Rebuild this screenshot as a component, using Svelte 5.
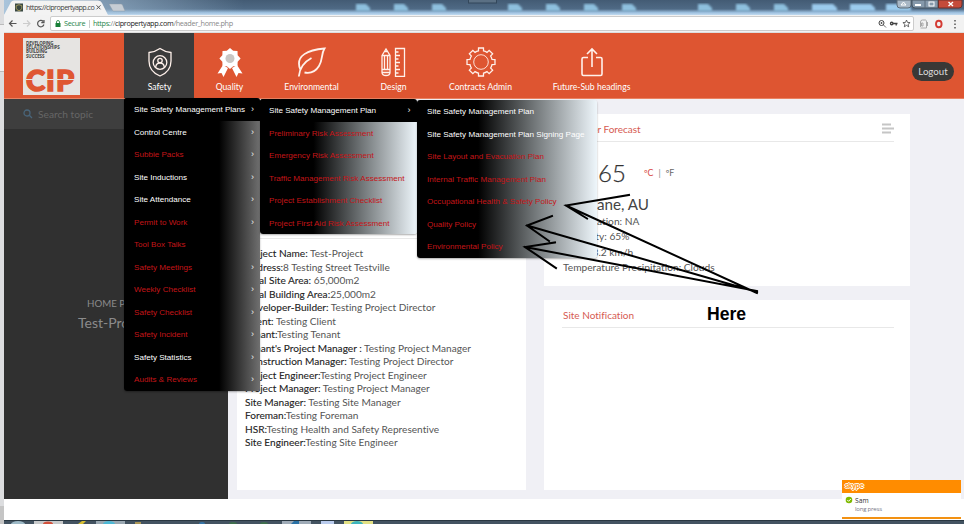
<script>
  const safety = [
    ['Site Safety Management Plans', 1, 1], ['Control Centre', 1, 1], ['Subbie Packs', 0, 1],
    ['Site Inductions', 1, 1], ['Site Attendance', 1, 1], ['Permit to Work', 0, 1],
    ['Tool Box Talks', 0, 0], ['Safety Meetings', 0, 1], ['Weekly Checklist', 0, 1],
    ['Safety Checklist', 0, 1], ['Safety Incident', 0, 1], ['Safety Statistics', 1, 1],
    ['Audits & Reviews', 0, 1]
  ];
  const plans = [
    ['Site Safety Management Plan', 1, 1], ['Preliminary Risk Assessment', 0, 0],
    ['Emergency Risk Assessment', 0, 0], ['Traffic Management Risk Assessment', 0, 0],
    ['Project Establishment Checklist', 0, 0], ['Project First Aid Risk Assessment', 0, 0]
  ];
  const documents = [
    ['Site Safety Management Plan', 1, 0], ['Site Safety Management Plan Signing Page', 1, 0],
    ['Site Layout and Evacuation Plan', 0, 0], ['Internal Traffic Management Plan', 0, 0],
    ['Occupational Health & Safety Policy', 0, 0], ['Quality Policy', 0, 0],
    ['Environmental Policy', 0, 0]
  ];
  const menus = [
    { cls: 'first', rows: safety },
    { cls: 'second', rows: plans },
    { cls: 'third', rows: documents }
  ];
  const details = [
    ['Project Name: ', 'Test-Project'], ['Address:', '8 Testing Street Testville'],
    ['Total Site Area: ', '65,000m2'], ['Total Building Area:', '25,000m2'],
    ['Developer-Builder: ', 'Testing Project Director'], ['Client: ', 'Testing Client'],
    ['Tenant:', 'Testing Tenant'], ["Tenant's Project Manager : ", 'Testing Project Manager'],
    ['Construction Manager: ', 'Testing Project Director'],
    ['Project Engineer:', 'Testing Project Engineer'],
    ['Project Manager: ', 'Testing Project Manager'], ['Site Manager: ', 'Testing Site Manager'],
    ['Foreman:', 'Testing Foreman'], ['HSR:', 'Testing Health and Safety Representive'],
    ['Site Engineer:', 'Testing Site Engineer']
  ];
  const nav = [
    ['Safety', 70], ['Quality', 71], ['Environmental', 93], ['Design', 71],
    ['Contracts Admin', 103], ['Future-Sub headings', 119]
  ];
  const gear = Array.from({ length: 8 }, (_, i) => {
    const pt = (r, d) => {
      const a = ((i * 45 + d) * Math.PI) / 180;
      return `${(15 + r * Math.sin(a)).toFixed(2)} ${(15 - r * Math.cos(a)).toFixed(2)}`;
    };
    return `${i ? 'L' : 'M'}${pt(11.3, -13)}L${pt(14.2, -10)}L${pt(14.2, 10)}L${pt(11.3, 13)}A11.3 11.3 0 0 1 ${pt(11.3, 32)}`;
  }).join('') + 'Z';
  const badge = Array.from({ length: 16 }, (_, i) => {
    const r = i % 2 ? 8.3 : 10.6;
    const a = (i * Math.PI) / 8;
    return `${(15 + r * Math.sin(a)).toFixed(2)},${(11.5 - r * Math.cos(a)).toFixed(2)}`;
  }).join(' ');
  const glows = [156, 194, 232, 270, 508, 546, 584, 622, 698, 736, 774, 812, 850, 886].filter((x) => x > 300);
</script>

<div class="screen">
  <div class="edge"><i></i><b></b></div>
  <div class="window">
    <div class="titlebar">
      <svg class="chrome" width="960" height="15" viewBox="4 0 960 15">
        <defs>
          <linearGradient id="sky" x2="0" y2="1">
            <stop offset="0" stop-color="#435b74" /><stop offset=".6" stop-color="#4f6a85" />
            <stop offset=".84" stop-color="#9dc0df" /><stop offset="1" stop-color="#c2dbf0" />
          </linearGradient>
          <linearGradient id="lit"><stop offset="0" stop-color="#a9c4db" /><stop offset="1" stop-color="#a9c4db" stop-opacity="0" /></linearGradient>
          <filter id="soft"><feGaussianBlur stdDeviation="1" /></filter>
        </defs>
        <rect x="4" width="960" height="15" fill="url(#sky)" />
        <rect x="4" width="240" height="14" fill="url(#lit)" />
        <g filter="url(#soft)">
          {#each [356, 394, 432, ...glows] as x}
            <path d="M{x} 4h{x > 800 ? 21 : 10}l4 4v3h-{x > 800 ? 25 : 14}z" fill={x > 800 ? '#9bcbed' : '#8ec0de'} />
          {/each}
        </g>
        <rect x="468.500" y="-1" width="28" height="4" fill="#5b7084" stroke="#33475a" />
        <path d="M4 15 L11 2 Q12 .5 14 .5 H98 Q101 .5 102 3 L108 15Z" fill="#f3f3f3" />
        <path d="M109 4h12q1 0 1.500 1l2.500 6h-12z" fill="#c6cdd4" stroke="#8b98a5" stroke-width=".4" />
        <rect x="15" y="3.500" width="8" height="8" fill="#394842" />
        <path d="M19 4.700l2.800 1v2.500q-.5 1.800-2.800 2.700-2.300-.9-2.800-2.700V5.700z" fill="none" stroke="#b8a964" stroke-width=".8" />
        <path d="M96.500 5.300l4 4m0-4l-4 4" stroke="#555" stroke-width="1" />
        <path d="M897 0h14v5q0 3-3 3h-8q-3 0-3-3z" fill="#a8b7c5" stroke="#5b6875" />
        <path d="M912 0h26v8h-23q-3 0-3-3z" fill="#8699ab" stroke="#465461" />
        <path d="M938.500 0H962v5q0 3-3 3h-20.500z" fill="#c54b3a" stroke="#6c302b" />
        <path d="M925 0v8" stroke="#596978" /><path d="M915 5h6" stroke="#fff" stroke-width="2" />
        <path d="M901 5h5l-2.500-3z" fill="none" stroke="#fff" />
        <rect x="929" y="2" width="5" height="4" fill="none" stroke="#fff" />
        <path d="M948.500 2l4.500 4m0-4l-4.500 4" stroke="#fff" stroke-width="1.400" />
      </svg>
      <span class="tabname">https://cipropertyapp.co</span>
    </div>

    <div class="toolbar">
      <svg width="46" height="18" viewBox="4 15 46 18" fill="none" stroke="#555" stroke-width="1.200">
        <path d="M16.500 23.500h-7m3-3l-3 3 3 3" /><path d="M23 23.500h7m-3-3l3 3-3 3" stroke="#ccc" />
        <path d="M43.200 21.500a3.200 3.200 0 1 0 .7 3M44 20v2.700h-2.700" />
      </svg>
      <div class="address">
        <svg width="6" height="8" viewBox="0 0 6 8"><path d="M.5 3h5v4h-5z" fill="#188038" /><path d="M1.500 3V2a1.500 1.500 0 0 1 3 0v1" fill="none" stroke="#188038" stroke-width=".8" /></svg>
        <span class="secure">Secure</span><span class="bar"></span>
        <span class="url"><em>https:</em>//<strong>cipropertyapp.com</strong>/header_home.php</span>
        <svg class="tools" width="36" height="12" viewBox="0 0 36 12" fill="none" stroke="#444">
          <circle cx="4.500" cy="5" r="2.500" /><path d="M6.500 7l2.500 2.500M3.500 5h2M4.500 4v2" stroke-width=".8" />
          <circle cx="14.700" cy="5.500" r="1.200" stroke-width="1.400" /><path d="M16 5.500h4.500M19.200 5.500v2" stroke-width="1.300" />
          <path d="M29.500 2l1 2.400 2.600.2-2 1.700.6 2.500-2.200-1.400-2.200 1.400.6-2.500-2-1.700 2.600-.2z" stroke-width=".8" />
        </svg>
      </div>
      <svg width="50" height="14" viewBox="0 0 50 14" fill="none">
        <path d="M6.500 10V5q0-2 2-2h3q1 0 1 2v6H6.500m2.500-5H7.500v3H9zM13.500 5v4" stroke="#aaa" />
        <ellipse cx="24.800" cy="7" rx="2.800" ry="3.300" stroke="#d43b33" stroke-width="1.900" />
        <path d="M41 3v1.500m0 2V8m0 2v1.500" stroke="#555" stroke-width="1.500" />
      </svg>
    </div>

    <header>
      <div class="logo">
        <p>DEVELOPING<br />RELATIONSHIPS<br />BUILDING<br />SUCCESS</p>
        <div class="cip"><span>CIP</span><i></i></div>
      </div>
      <nav>
        {#each nav as [label, w], i}
          <div class="item" class:active={i === 0} style="width:{w}px">
            <svg width="30" height="30" viewBox="0 0 30 30" fill="none" stroke="#fff1eb" stroke-width="1.300">
              {#if i === 0}
                <path d="M15 1.500Q20 5 26 5.500V14C26 22 21 26.500 15 29 9 26.500 4 22 4 14V5.500Q10 5 15 1.500z" />
                <circle cx="15" cy="15.500" r="6.800" /><circle cx="15" cy="13.500" r="2.200" /><path d="M10.700 20q.5-4 4.300-4t4.300 4" />
              {:else if i === 1}
                <g stroke="none"><path d="M8 18L2.500 26.500l4-.5 2 4 4.500-9zM22 18l5.500 8.500-4-.5-2 4-4.500-9z" fill="#fff" /><polygon points={badge} fill="#fff" /><circle cx="15" cy="11.500" r="4.500" fill="#c9c6c3" /></g>
              {:else if i === 2}
                <path d="M1.800 29.500C2.500 21 7 15 14.500 11M3.300 22.500C-2.500 8 12 3 27.500 1.500 24 7 26 13 22 19 18 25.500 12.500 26.500 7.500 25.500" stroke-width="1.800" />
              {:else if i === 3}
                <path d="M3 8.500l4-6.500 4 6.500v17q0 3-4 3t-4-3zM3 8.500h8M3 22.500h8M3 25.500h8M5.500 9v13M8.500 9v13M6 4.500h2" />
                <path d="M16.500 1.500h9v28h-9zM16.500 5h3M16.500 8.500h4.500M16.500 12h3M16.500 15.500h4.500M16.500 19h3M16.500 22.500h4.500M16.500 26h3" />
              {:else if i === 4}
                <path d={gear} /><circle cx="15" cy="15" r="7.300" stroke-width=".9" />
              {:else}
                <path d="M11 10.500H6.500q-1.500 0-1.500 1.500v15q0 1.500 1.500 1.500h17q1.500 0 1.500-1.500V12q0-1.500-1.500-1.500H19M15 20V2M10 7l5-5 5 5" stroke-width="1.600" />
              {/if}
            </svg>
            <span>{label}</span>
          </div>
        {/each}
      </nav>
      <div class="logout">Logout</div>
    </header>

    <main>
      <aside>
        <div class="search">
          <svg width="10" height="10" viewBox="0 0 10 10" fill="none" stroke="#49657a" stroke-width="1.300"><circle cx="4" cy="4" r="3" /><path d="M6.300 6.300L9 9" /></svg>
          <span>Search topic</span>
        </div>
        <div class="home">HOME PAGE</div>
        <div class="project">Test-Project</div>
      </aside>
      <section class="info">
        <div class="rule"></div>
        {#each details as [k, v]}<div class="line"><b>{k}</b>{v}</div>{/each}
      </section>
      <div class="right">
        <section class="weather">
          <h2><span>Weather Forecast</span><svg width="13" height="11" viewBox="0 0 13 11" stroke="#c5c5c5" stroke-width="2"><path d="M1 1.500h9M1 5.500h12M1 9.500h9" /></svg></h2>
          <div class="temp"><span class="num">65</span><span class="unit"><em>ºC</em><i>|</i>ºF</span></div>
          <div class="city">Brisbane, AU</div>
          <p>Precipitation: NA</p>
          <p>Humidity: 65%</p>
          <p>Wind: 3.2 km/h</p>
          <p>Temperature Precipitation: Clouds</p>
        </section>
        <section class="notice"><h2><span>Site Notification</span></h2></section>
      </div>
    </main>
    <div class="blank"></div>
    <svg class="taskbar" width="960" height="4" viewBox="4 0 960 4">
      <rect x="4" width="960" height="4" fill="#435361" /><path d="M4 .5h960" stroke="#293741" />
      <ellipse cx="18" cy="4" rx="7" ry="3" fill="#9db9c6" />
      <path d="M34 1h29v3H34z" fill="#c7c9ca" /><ellipse cx="48" cy="4" rx="5" ry="2.500" fill="#d2513c" />
      <path d="M78 4l4-3h4l-3 3z" fill="#d6bf33" /><path d="M96 1h29v3H96z" fill="#9aa8b2" />
      <ellipse cx="109" cy="4" rx="6" ry="3" fill="#4db8d5" /><path d="M135 2h6v2h-6z" fill="#ab9656" />
      <ellipse cx="202" cy="4" rx="3" ry="2" fill="#3575a8" /><ellipse cx="233" cy="4" rx="4" ry="2" fill="#3f704d" /><ellipse cx="264" cy="4" rx="4" ry="2" fill="#3f704d" />
      <path d="M282 1h29v3h-29z" fill="#9fabb7" /><path d="M291 4l3-3h5v3z" fill="#2a71a5" /><path d="M321 1h13v3h-13z" fill="#b9cbed" />
      <path d="M344 1h29v3h-29z" fill="#e2e083" /><ellipse cx="357" cy="4" rx="6" ry="3" fill="#3eb5bd" />
    </svg>
  </div>

  {#each menus as menu}
    <ul class="menu {menu.cls}">
      {#each menu.rows as [label, live, more], i}
        <li class:live class:open={i === 0 && more}><span>{label}</span>{#if more}<i>›</i>{/if}</li>
      {/each}
    </ul>
  {/each}

  <svg class="arrows" width="964" height="524" viewBox="0 0 964 524" fill="none" stroke="#000" stroke-width="2" stroke-linecap="square">
    <path d="M757 293L566 205.500M629 195L566 205.500L587 218.500M757 292L527 225.500M552 216L527 225.500L549 241M757 291L525 247M555 242.500L525 247L556 268" />
  </svg>
  <div class="here">Here</div>

  <div class="skype">
    <div class="brand">skype</div>
    <div class="who">
      <svg width="8" height="8" viewBox="0 0 8 8"><circle cx="4" cy="4" r="3.300" fill="#7fba00" /><path d="M2.300 4l1.300 1.300L5.800 3" fill="none" stroke="#fff" /></svg>
      <div><div class="sam">Sam</div><div class="msg">long press</div></div>
    </div>
  </div>
</div>

<style>
  :global(body) { background: #fff; overflow: hidden; }
  .screen { position: relative; display: flex; width: 964px; height: 524px; overflow: hidden; font-family: Lato, sans-serif; font-variant-ligatures: none; }
  .screen :global(*) { box-sizing: border-box; }
  em, i { font-style: normal; }
  svg { flex: none; display: block; }
  .edge { width: 4px; background: #dcdddf; padding-top: 24px; }
  .edge i { display: block; height: 48px; background: #f0f0f1; border: solid #bbb; border-width: 1px 0; }
  .edge b { display: block; height: 18px; margin-top: 434px; background: #c5c5c5; }
  .window { width: 960px; display: flex; flex-direction: column; }
  .titlebar { height: 15px; position: relative; }
  .tabname { position: absolute; left: 22px; top: 2px; font: 7.200px/11px "Open Sans", sans-serif; letter-spacing: -.55px; color: #444; white-space: nowrap; }
  .toolbar { height: 18px; background: #f2f2f2; display: flex; align-items: center; border-bottom: 1px solid #ddd; }
  .address { width: 364px; flex: 1; height: 15px; background: #fff; border: 1px solid #ccc; border-radius: 2px; display: flex; align-items: center; padding-left: 4px; font: 7.300px/13px "Open Sans", sans-serif; white-space: nowrap; }
  .secure { color: #27864a; margin-left: 3px; letter-spacing: -.3px; width: 24px; }
  .bar { height: 8px; width: 1px; background: #ccc; margin: 0 3px 0 1px; }
  .url { color: #888; letter-spacing: -.36px; }
  .url em { color: #27864a; }
  .url strong { color: #222; font-weight: 400; }
  .tools { margin-left: auto; }
  header { height: 66px; background: #de5531; border-bottom: 1px solid #e98261; display: flex; }
  .logo { width: 57px; height: 57px; margin: 5px 0 0 19px; background: #e6e4e2; padding: 3px 0 0 3px; }
  .logo p { margin: 0; font: 700 4.500px/4.200px "Open Sans", sans-serif; letter-spacing: -.12px; color: #444; }
  .cip { position: relative; width: 53px; height: 28px; margin-top: 8px; }
  .cip span { display: block; font: 900 29px/28px Lato, sans-serif; letter-spacing: 1px; color: #df5632; -webkit-text-stroke: 1.500px #df5632; }
  .cip i { position: absolute; left: 0; top: 13.500px; width: 52px; height: 1px; background: #e6e4e2; }
  nav { display: flex; margin-left: 44px; }
  .item { display: flex; flex-direction: column; align-items: center; padding-top: 14px; color: #fff; font-size: 8.600px; line-height: 12px; white-space: nowrap; }
  .item span { margin-top: 4px; }
  .active { background: #3b3b3b; padding-left: 1px; }
  .logout { margin: 29px 10px 0 auto; width: 42px; height: 19px; border-radius: 10px; background: #393836; color: #ddd; font-size: 9.700px; line-height: 19px; text-align: center; }
  main { height: 400px; display: flex; background: #f0f0f5; }
  aside { width: 224px; background: #303030; color: #8b8b8b; text-align: left; }
  .search { height: 30px; background: #3e3e3e; display: flex; align-items: center; padding-left: 19px; gap: 5px; color: #666; font-size: 10.200px; }
  .home { margin: 166px 0 0 83px; font-size: 9.700px; line-height: 16px; }
  .project { margin: 3px 0 0 74px; font-size: 14px; line-height: 18px; }
  .info { width: 289px; height: 375px; margin: 16px 0 0 9px; background: #fff; padding: 123px 0 0 8px; }
  .rule { border-top: 1px solid #e8e8e8; margin-right: 16px; height: 9px; }
  .line { height: 13.500px; line-height: 13.500px; font-size: 10.100px; color: #555; white-space: pre; }
  .line b { font-weight: 400; color: #222; -webkit-text-stroke: .1px #222; }
  .right { width: 366px; margin: 15px 0 0 18px; }
  .right section { background: #fff; padding: 0 16px 0 19px; }
  .weather { height: 172px; }
  .notice { height: 190px; margin-top: 14px; }
  h2 { margin: 0; height: 28px; border-bottom: 1px solid #e8e8e8; display: flex; justify-content: space-between; align-items: center; font-size: 10px; font-weight: 400; color: #d65a52; margin-left: -1px; padding-left: 1px; padding-top: 2px; }
  .temp { display: flex; height: 44px; margin-top: 9px; padding-left: 35px; color: #333; }
  .num { width: 46px; font-size: 24px; line-height: 44px; font-weight: 300; -webkit-text-stroke: .25px #333; }
  .unit { font-size: 8.800px; line-height: 43px; color: #666; }
  .unit em { color: #d84a45; }
  .unit i { margin: 0 5px; color: #888; }
  .city { font-size: 15.200px; line-height: 18px; height: 19px; color: #444; }
  p { margin: 0; }
  .weather p { font-size: 10.200px; line-height: 15.400px; color: #555; }
  .blank { height: 21px; background: #fff; }
  .taskbar { height: 4px; }
  .menu { position: absolute; margin: 0; padding: 0; list-style: none; border-radius: 3px; overflow: hidden; font: 8.100px/23.500px "Liberation Sans", Arial, sans-serif; box-shadow: 0 1px 2px #0005; }
  .menu li { height: 22.500px; padding: 0 6px 0 10px; display: flex; justify-content: space-between; white-space: nowrap; color: #c41518; }
  .menu .live { color: #fff; }
  .menu .open { background: #000; }
  .menu i { color: #eee; font-size: 9px; line-height: 22px; }
  .first { left: 124px; top: 98px; width: 136px; background: linear-gradient(90deg, #000 70%, #707070); }
  .second { left: 260px; top: 99px; width: 156.500px; background: linear-gradient(90deg, #000 34%, #717678 65%, #eef6fb); }
  .second li { padding-left: 9px; }
  .third { left: 417px; top: 100px; width: 180px; background: linear-gradient(90deg, #000 34%, #717678 65%, #eef6fb); }
  .arrows { position: absolute; left: 0; top: 0; }
  .here { position: absolute; left: 707px; top: 303px; font: 700 17.600px/22px "Liberation Sans", Arial, sans-serif; color: #000; }
  .skype { position: absolute; left: 842px; top: 480px; width: 119px; height: 39px; background: #fff; border-bottom: 2px solid #f29112; }
  .brand { height: 13px; background: #ff8c00; color: #ff9d25; font: 700 7px/11px "Open Sans", sans-serif; padding-left: 3px; letter-spacing: -.4px; text-shadow: 1px 0 #fff, -1px 0 #fff, 0 1px #fff, 0 -1px #fff; }
  .who { display: flex; padding: 3px 0 0 3px; gap: 2px; font: 6.700px/9px "Open Sans", sans-serif; }
  .sam { color: #333; }
  .msg { color: #778; font-size: 6px; letter-spacing: -.2px; }
</style>
